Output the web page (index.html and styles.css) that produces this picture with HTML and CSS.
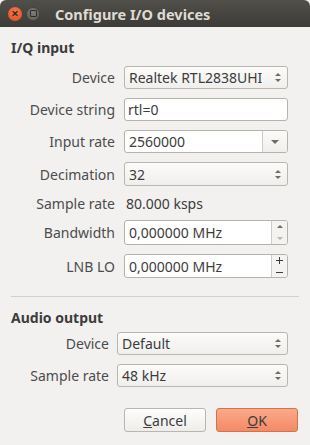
FILE: index.html
```html
<!DOCTYPE html>
<html lang="en">
<head>
  <meta charset="UTF-8">
  <title>Configure I/O devices</title>
  <link rel="stylesheet" href="styles.css">
</head>
<body>
  <div class="window">
    <div class="titlebar">
      <span class="wbtn close">&times;</span>
      <span class="wbtn mini"><span class="sq"></span></span>
      <span class="title">Configure I/O devices</span>
    </div>

    <div class="content">
      <div class="section-title">I/Q input</div>
      <div class="form iq">
        <label>Device</label>
        <div class="combo"><span class="val">Realtek RTL2838UHI</span><span class="updown"><i class="up"></i><i class="dn"></i></span></div>

        <label>Device string</label>
        <div class="entry">rtl=0</div>

        <label>Input rate</label>
        <div class="editcombo"><span class="val">2560000</span><span class="drop"><i class="dn"></i></span></div>

        <label>Decimation</label>
        <div class="combo"><span class="val">32</span><span class="updown"><i class="up"></i><i class="dn"></i></span></div>

        <label class="plain">Sample rate</label>
        <div class="plain-val">80.000 ksps</div>

        <label>Bandwidth</label>
        <div class="spin"><span class="val">0,000000 MHz</span><span class="btns"><i class="up"></i><i class="dn off"></i></span></div>

        <label>LNB LO</label>
        <div class="spin"><span class="val">0,000000 MHz</span>
          <span class="btns pm">
            <svg width="7" height="7" viewBox="0 0 7 7"><path d="M3.5 0v7M0 3.5h7" stroke="#3c3c3c" stroke-width="1"/></svg>
            <svg width="7" height="7" viewBox="0 0 7 7"><path d="M0 3.5h7" stroke="#3c3c3c" stroke-width="1"/></svg>
          </span>
        </div>
      </div>

      <div class="sep"></div>

      <div class="section-title">Audio output</div>
      <div class="form audio">
        <label>Device</label>
        <div class="combo"><span class="val">Default</span><span class="updown"><i class="up"></i><i class="dn"></i></span></div>

        <label>Sample rate</label>
        <div class="combo"><span class="val">48 kHz</span><span class="updown"><i class="up"></i><i class="dn"></i></span></div>
      </div>

      <div class="buttons">
        <button class="btn"><u>C</u>ancel</button>
        <button class="btn ok"><u>O</u>K</button>
      </div>
    </div>
  </div>
</body>
</html>
```

FILE: styles.css
```css
body {
  margin: 0;
  background: #f2f1f0;
  font-family: "Noto Sans", "DejaVu Sans", sans-serif;
  font-size: 14px;
  color: #3c3c3c;
}
.window {
  width: 310px;
  height: 445px;
  background: #f2f1f0;
  overflow: hidden;
}
.titlebar {
  height: 27px;
  background: linear-gradient(#504f4a, #3c3b37);
  border-radius: 6px 6px 0 0;
  display: flex;
  align-items: center;
  padding-left: 8px;
  box-sizing: border-box;
}
.wbtn {
  width: 14px;
  height: 14px;
  border-radius: 50%;
  display: flex;
  align-items: center;
  justify-content: center;
  margin-right: 4px;
  box-sizing: border-box;
}
.close {
  background: radial-gradient(circle at 50% 35%, #f47a51, #dc4a1d);
  color: #3c2a24;
  font-size: 13px;
  line-height: 1;
  font-weight: bold;
}
.mini {
  background: radial-gradient(circle at 50% 35%, #7d7c77, #5c5b56);
  border: 1px solid #45443f;
}
.mini .sq {
  width: 5px;
  height: 5px;
  border: 1px solid #2e2d2a;
  border-radius: 1px;
}
.title {
  margin-left: 11px;
  color: #dfdbd2;
  font-weight: bold;
  font-size: 14.5px;
}
.content {
  padding: 12px 11px 0 11px;
}
.section-title {
  font-weight: bold;
  height: 17px;
  line-height: 17px;
}
.form {
  display: grid;
  align-items: center;
  margin-top: 10px;
}
.form.iq {
  grid-template-columns: 104px 164px;
  column-gap: 9px;
  row-gap: 9px;
  grid-template-rows: 23px 23px 23px 24px 16px 25px 24px;
}
.form.audio {
  grid-template-columns: 98px 171px;
  column-gap: 8px;
  row-gap: 9px;
  grid-template-rows: 23px 23px;
  margin-top: 6px;
}
.form label {
  text-align: right;
  color: #4c4c4c;
}
.plain-val {
  padding-left: 2px;
}
.combo, .entry, .editcombo, .spin {
  height: 100%;
  box-sizing: border-box;
  border: 1px solid #bab6ae;
  border-radius: 3px;
  display: flex;
  align-items: center;
  color: #3c3c3c;
}
.combo {
  background: linear-gradient(#fbfbfa, #f0efed);
}
.entry, .editcombo, .spin {
  background: #fff;
  border-color: #b7b3ab;
}
.entry {
  padding-left: 3px;
}
.val {
  flex: 1;
  padding-left: 4px;
  white-space: nowrap;
  overflow: hidden;
}
.updown {
  width: 18px;
  display: flex;
  flex-direction: column;
  align-items: center;
  gap: 3px;
}
i.up, i.dn {
  display: block;
  width: 0;
  height: 0;
  border-left: 3px solid transparent;
  border-right: 3px solid transparent;
}
i.up {
  border-bottom: 3px solid #6e6c68;
}
i.dn {
  border-top: 3px solid #6e6c68;
}
i.off {
  border-top-color: #b8b6b2;
}
.drop {
  width: 24px;
  height: 100%;
  border-left: 1px solid #cfccc6;
  background: linear-gradient(#fbfbfa, #f0efed);
  border-radius: 0 2px 2px 0;
  display: flex;
  align-items: center;
  justify-content: center;
}
.drop i.dn {
  border-left-width: 4px;
  border-right-width: 4px;
  border-top-width: 4px;
}
.btns {
  width: 15px;
  height: 100%;
  border-left: 1px solid #cfccc6;
  background: #f4f3f1;
  border-radius: 0 2px 2px 0;
  display: flex;
  flex-direction: column;
  align-items: center;
  justify-content: space-around;
}
.btns.pm {
  justify-content: center;
  gap: 5px;
}
.btns.pm svg {
  display: block;
}
.sep {
  height: 1px;
  background: #d3d0cb;
  margin: 18px 0 12px 0;
}
.buttons {
  display: flex;
  justify-content: flex-end;
  gap: 10px;
  margin-top: 21px;
  padding-right: 1px;
}
.btn {
  width: 82px;
  height: 24px;
  font-family: inherit;
  font-size: 14px;
  color: #3c3c3c;
  border: 1px solid #bab6ae;
  border-radius: 3px;
  background: linear-gradient(#fdfdfc, #eeedeb);
  padding: 0;
}
.btn.ok {
  background: linear-gradient(#fba98a, #f38a63);
  border-color: #cd7551;
}
```
